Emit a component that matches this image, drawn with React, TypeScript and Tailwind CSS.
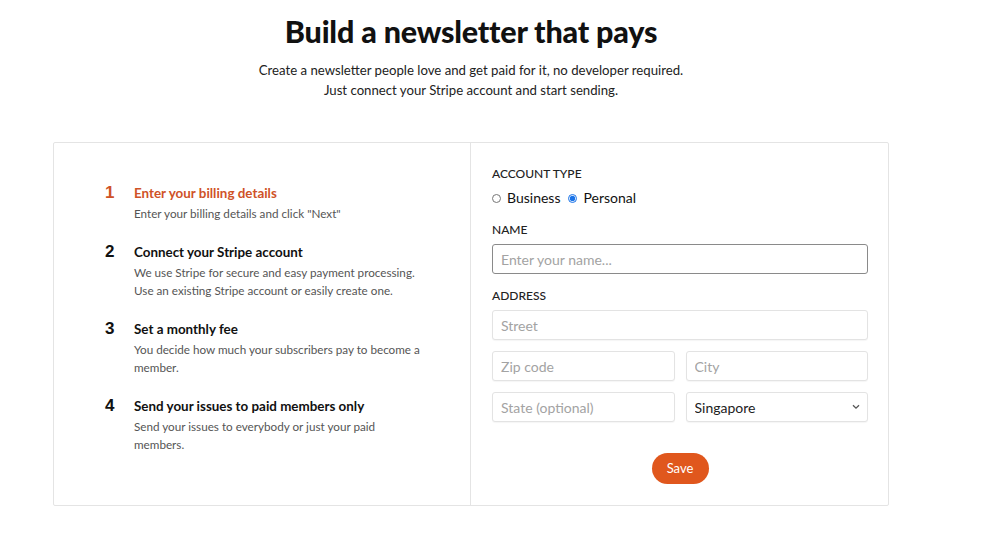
import { useState } from "react";

const steps = [
  {
    n: "1",
    title: "Enter your billing details",
    desc: 'Enter your billing details and click "Next"',
    active: true,
  },
  {
    n: "2",
    title: "Connect your Stripe account",
    desc: "We use Stripe for secure and easy payment processing. Use an existing Stripe account or easily create one.",
  },
  {
    n: "3",
    title: "Set a monthly fee",
    desc: "You decide how much your subscribers pay to become a member.",
  },
  {
    n: "4",
    title: "Send your issues to paid members only",
    desc: "Send your issues to everybody or just your paid members.",
  },
];

const inputClass =
  "h-[30px] w-full rounded-[3px] border border-[#e3e3e3] bg-white px-2 text-[14px] text-[#222] shadow-[0_1px_1px_rgba(0,0,0,0.04)] outline-none placeholder:text-[#a3a3a3]";

export default function App() {
  const [accountType, setAccountType] = useState("personal");

  return (
    <div className="min-h-[546px] bg-white font-['Lato','Noto_Sans',sans-serif] text-[#111]">
      <div className="ml-[53px] w-[836px] pt-[12px]">
        {/* Header */}
        <div className="text-center">
          <h1 className="text-[30.5px] font-black leading-[38px] tracking-[-0.2px]">
            Build a newsletter that pays
          </h1>
          <p className="mt-[10px] text-[13.2px] leading-[20px] text-[#222]">
            Create a newsletter people love and get paid for it, no developer required.
            <br />
            Just connect your Stripe account and start sending.
          </p>
        </div>

        {/* Card */}
        <div className="mt-[42px] grid h-[364px] grid-cols-2 rounded-[2px] border border-[#e4e4e4]">
          {/* Steps */}
          <div className="flex flex-col gap-[20px] border-r border-[#e4e4e4] pl-[51px] pr-[46px] pt-[40px]">
            {steps.map((s) => (
              <div key={s.n} className="flex gap-[17px]">
                <div
                  className={`w-[12px] shrink-0 font-['Liberation_Sans',sans-serif] text-[17px] font-bold leading-[20px] ${
                    s.active ? "text-[#cf5227]" : "text-[#111]"
                  }`}
                >
                  {s.n}
                </div>
                <div>
                  <div
                    className={`text-[13.4px] font-bold leading-[20px] ${
                      s.active ? "text-[#cf5227]" : "text-[#111]"
                    }`}
                  >
                    {s.title}
                  </div>
                  <div className="mt-[1px] text-[11.7px] leading-[18px] text-[#555]">
                    {s.desc}
                  </div>
                </div>
              </div>
            ))}
          </div>

          {/* Form */}
          <div className="pl-[21px] pr-[20px] pt-[23px]">
            <div className="text-[12px] font-medium leading-[16px] text-[#222]">ACCOUNT TYPE</div>
            <div className="mt-[7px] flex items-center gap-[8px] text-[14px] leading-[18px]">
              <label className="flex items-center gap-[6px]">
                <input
                  type="radio"
                  name="type"
                  checked={accountType === "business"}
                  onChange={() => setAccountType("business")}
                  className="m-0 h-[9px] w-[9px] accent-[#1a73e8]"
                />
                Business
              </label>
              <label className="flex items-center gap-[6px]">
                <input
                  type="radio"
                  name="type"
                  checked={accountType === "personal"}
                  onChange={() => setAccountType("personal")}
                  className="m-0 h-[9px] w-[9px] accent-[#1a73e8]"
                />
                Personal
              </label>
            </div>

            <div className="mt-[15px] text-[12px] font-medium leading-[16px] text-[#222]">NAME</div>
            <input
              className="mt-[6px] h-[30px] w-full rounded-[3px] border border-[#8a8a8a] bg-white px-2 text-[14px] outline-none placeholder:text-[#a3a3a3]"
              placeholder="Enter your name..."
            />

            <div className="mt-[14px] text-[12px] font-medium leading-[16px] text-[#222]">ADDRESS</div>
            <input className={`mt-[6px] ${inputClass}`} placeholder="Street" />
            <div className="mt-[11px] grid grid-cols-2 gap-[11px]">
              <input className={inputClass} placeholder="Zip code" />
              <input className={inputClass} placeholder="City" />
            </div>
            <div className="mt-[11px] grid grid-cols-2 gap-[11px]">
              <input className={inputClass} placeholder="State (optional)" />
              <div className="relative">
                <select className={`${inputClass} appearance-none pr-6`} defaultValue="Singapore">
                  <option>Singapore</option>
                  <option>Malaysia</option>
                  <option>Indonesia</option>
                </select>
                <svg
                  className="pointer-events-none absolute right-[8px] top-[12px]"
                  width="8"
                  height="6"
                  viewBox="0 0 8 6"
                  fill="none"
                  stroke="#555"
                  strokeWidth="1.3"
                >
                  <path d="M1 1.2l3 3 3-3" />
                </svg>
              </div>
            </div>

            <div className="mt-[31px] flex justify-center">
              <button className="h-[31px] w-[57px] rounded-full bg-[#e0571d] text-[13px] text-white">
                Save
              </button>
            </div>
          </div>
        </div>
      </div>
    </div>
  );
}
